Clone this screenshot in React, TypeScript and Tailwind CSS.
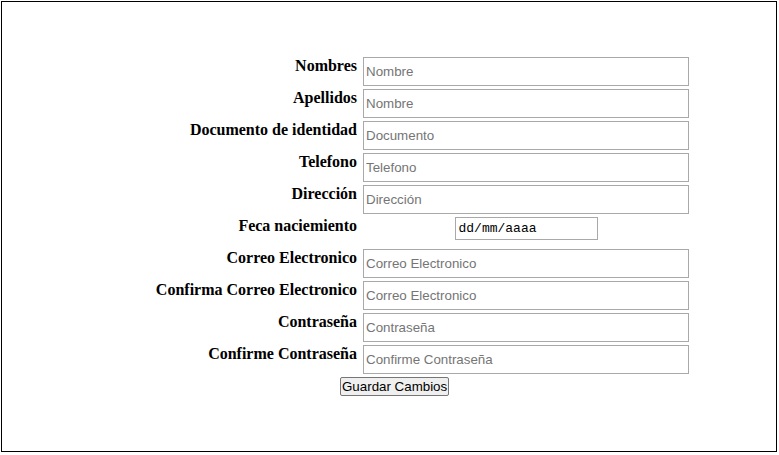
const fields = [
  { label: 'Nombres', placeholder: 'Nombre' },
  { label: 'Apellidos', placeholder: 'Nombre' },
  { label: 'Documento de identidad', placeholder: 'Documento' },
  { label: 'Telefono', placeholder: 'Telefono' },
  { label: 'Dirección', placeholder: 'Dirección' },
  { label: 'Feca naciemiento', placeholder: '', date: true },
  { label: 'Correo Electronico', placeholder: 'Correo Electronico' },
  { label: 'Confirma Correo Electronico', placeholder: 'Correo Electronico' },
  { label: 'Contraseña', placeholder: 'Contraseña' },
  { label: 'Confirme Contraseña', placeholder: 'Confirme Contraseña' },
];

export default function App() {
  return (
    <div className="min-h-screen bg-white pl-px pt-px">
      <div className="h-[451px] w-[776px] border border-black bg-white pt-[55px]">
        <div className="ml-[105px] grid grid-cols-[250px_326px] gap-x-[6px] gap-y-[3px]">
          {fields.map((f) => (
            <div key={f.label} className="contents">
              <div
                className="h-[29px] whitespace-nowrap text-right text-[16px] leading-[18px] font-bold text-black"
                style={{ fontFamily: '"Liberation Serif", "Times New Roman", serif' }}
              >
                {f.label}
              </div>
              <div className="h-[29px]">
                {f.date ? (
                  <div className="flex justify-center">
                    <input
                      type="text"
                      defaultValue="dd/mm/aaaa"
                      className="h-[23px] w-[143px] border border-[#a9a9a9] bg-white px-[3px] text-[13px] text-black outline-none"
                      style={{ fontFamily: '"Liberation Mono", "Courier New", monospace' }}
                    />
                  </div>
                ) : (
                  <input
                    type="text"
                    placeholder={f.placeholder}
                    className="h-[29px] w-[326px] border border-[#a9a9a9] bg-white px-[2px] text-[13.33px] text-black outline-none placeholder:text-[#757575]"
                    style={{ fontFamily: '"Liberation Sans", Arial, sans-serif' }}
                  />
                )}
              </div>
            </div>
          ))}
          <div className="col-span-2 flex">
            <button
              type="button"
              className="ml-[233px] h-[19px] rounded-[2px] border border-[#767676] bg-[#efefef] px-px text-[13.33px] leading-[15px] text-black"
              style={{ fontFamily: '"Liberation Sans", Arial, sans-serif' }}
            >
              Guardar Cambios
            </button>
          </div>
        </div>
      </div>
    </div>
  );
}
